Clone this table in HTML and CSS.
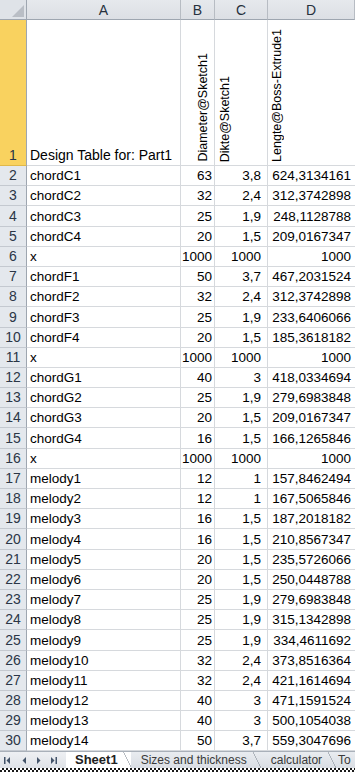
FILE: index.html
```html
<!DOCTYPE html>
<html>
<head>
<meta charset="utf-8">
<link rel="stylesheet" href="styles.css">
</head>
<body>
<div class="sheet">
  <div class="corner"><svg width="12" height="12" viewBox="0 0 12 12"><polygon points="12,0 12,12 0,12" fill="#b9bec5"/></svg></div>
  <div class="ch">A</div>
  <div class="ch">B</div>
  <div class="ch">C</div>
  <div class="ch">D</div>

  <div class="rh sel">1</div>
  <div class="c a title">Design Table for: Part1</div>
  <div class="c rot rot-b"><span>Diameter@Sketch1</span></div>
  <div class="c rot rot-c"><span>Dikte@Sketch1</span></div>
  <div class="c rot rot-d"><span>Lengte@Boss-Extrude1</span></div>

  <div class="rh">2</div><div class="c a">chordC1</div><div class="c b">63</div><div class="c cc">3,8</div><div class="c d">624,3134161</div>
  <div class="rh">3</div><div class="c a">chordC2</div><div class="c b">32</div><div class="c cc">2,4</div><div class="c d">312,3742898</div>
  <div class="rh">4</div><div class="c a">chordC3</div><div class="c b">25</div><div class="c cc">1,9</div><div class="c d">248,1128788</div>
  <div class="rh">5</div><div class="c a">chordC4</div><div class="c b">20</div><div class="c cc">1,5</div><div class="c d">209,0167347</div>
  <div class="rh">6</div><div class="c a">x</div><div class="c b">1000</div><div class="c cc">1000</div><div class="c d">1000</div>
  <div class="rh">7</div><div class="c a">chordF1</div><div class="c b">50</div><div class="c cc">3,7</div><div class="c d">467,2031524</div>
  <div class="rh">8</div><div class="c a">chordF2</div><div class="c b">32</div><div class="c cc">2,4</div><div class="c d">312,3742898</div>
  <div class="rh">9</div><div class="c a">chordF3</div><div class="c b">25</div><div class="c cc">1,9</div><div class="c d">233,6406066</div>
  <div class="rh">10</div><div class="c a">chordF4</div><div class="c b">20</div><div class="c cc">1,5</div><div class="c d">185,3618182</div>
  <div class="rh">11</div><div class="c a">x</div><div class="c b">1000</div><div class="c cc">1000</div><div class="c d">1000</div>
  <div class="rh">12</div><div class="c a">chordG1</div><div class="c b">40</div><div class="c cc">3</div><div class="c d">418,0334694</div>
  <div class="rh">13</div><div class="c a">chordG2</div><div class="c b">25</div><div class="c cc">1,9</div><div class="c d">279,6983848</div>
  <div class="rh">14</div><div class="c a">chordG3</div><div class="c b">20</div><div class="c cc">1,5</div><div class="c d">209,0167347</div>
  <div class="rh">15</div><div class="c a">chordG4</div><div class="c b">16</div><div class="c cc">1,5</div><div class="c d">166,1265846</div>
  <div class="rh">16</div><div class="c a">x</div><div class="c b">1000</div><div class="c cc">1000</div><div class="c d">1000</div>
  <div class="rh">17</div><div class="c a">melody1</div><div class="c b">12</div><div class="c cc">1</div><div class="c d">157,8462494</div>
  <div class="rh">18</div><div class="c a">melody2</div><div class="c b">12</div><div class="c cc">1</div><div class="c d">167,5065846</div>
  <div class="rh">19</div><div class="c a">melody3</div><div class="c b">16</div><div class="c cc">1,5</div><div class="c d">187,2018182</div>
  <div class="rh">20</div><div class="c a">melody4</div><div class="c b">16</div><div class="c cc">1,5</div><div class="c d">210,8567347</div>
  <div class="rh">21</div><div class="c a">melody5</div><div class="c b">20</div><div class="c cc">1,5</div><div class="c d">235,5726066</div>
  <div class="rh">22</div><div class="c a">melody6</div><div class="c b">20</div><div class="c cc">1,5</div><div class="c d">250,0448788</div>
  <div class="rh">23</div><div class="c a">melody7</div><div class="c b">25</div><div class="c cc">1,9</div><div class="c d">279,6983848</div>
  <div class="rh">24</div><div class="c a">melody8</div><div class="c b">25</div><div class="c cc">1,9</div><div class="c d">315,1342898</div>
  <div class="rh">25</div><div class="c a">melody9</div><div class="c b">25</div><div class="c cc">1,9</div><div class="c d">334,4611692</div>
  <div class="rh">26</div><div class="c a">melody10</div><div class="c b">32</div><div class="c cc">2,4</div><div class="c d">373,8516364</div>
  <div class="rh">27</div><div class="c a">melody11</div><div class="c b">32</div><div class="c cc">2,4</div><div class="c d">421,1614694</div>
  <div class="rh">28</div><div class="c a">melody12</div><div class="c b">40</div><div class="c cc">3</div><div class="c d">471,1591524</div>
  <div class="rh">29</div><div class="c a">melody13</div><div class="c b">40</div><div class="c cc">3</div><div class="c d">500,1054038</div>
  <div class="rh">30</div><div class="c a">melody14</div><div class="c b">50</div><div class="c cc">3,7</div><div class="c d">559,3047696</div>
</div>

<div class="tabbar">
  <div class="nav">
    <svg width="60" height="15" viewBox="0 0 60 15">
      <rect x="4" y="4" width="1.5" height="7" fill="#44546a"/>
      <polygon points="10,4 10,11 6.5,7.5" fill="#44546a"/>
      <polygon points="26,4 26,11 22.5,7.5" fill="#44546a"/>
      <polygon points="37,4 37,11 40.5,7.5" fill="#44546a"/>
      <polygon points="51,4 51,11 54.5,7.5" fill="#44546a"/>
      <rect x="55.5" y="4" width="1.5" height="7" fill="#44546a"/>
    </svg>
  </div>
  <div class="tab active">Sheet1</div>
  <div class="tab">Sizes and thickness</div>
  <div class="tab">calculator</div>
  <div class="tab last">To</div>
</div>
<div class="checker"></div>
</body>
</html>
```
FILE: styles.css
```css
html, body {
  margin: 0;
  padding: 0;
  background: #ffffff;
  overflow: hidden;
}

body {
  width: 355px;
  height: 773px;
  font-family: "Liberation Sans", Arial, sans-serif;
  color: #000;
}

.sheet {
  display: grid;
  grid-template-columns: 27px 154px 34px 53px 87px;
  grid-template-rows: 20px 146px repeat(29, 20.2px);
}

.corner {
  background: #dfe3e8;
  border-right: 1px solid #9ea6b0;
  border-bottom: 1px solid #9ea6b0;
  box-sizing: border-box;
  display: flex;
  align-items: flex-end;
  justify-content: flex-end;
  padding: 0 2px 2px 0;
}

.ch {
  background: linear-gradient(#e6e9ed, #dcdfe4);
  border-right: 1px solid #b7bcc3;
  border-bottom: 1px solid #9ea6b0;
  box-sizing: border-box;
  display: flex;
  align-items: center;
  justify-content: center;
  font-size: 14px;
  color: #27313d;
  padding-top: 1px;
}

.rh {
  background: #e4e8ed;
  border-right: 1px solid #9ea6b0;
  border-bottom: 1px solid #c4c9d0;
  box-sizing: border-box;
  display: flex;
  align-items: flex-end;
  justify-content: center;
  font-size: 14px;
  color: #2b3646;
  padding-bottom: 2px;
}

.rh.sel {
  background: #f9d25f;
  border-bottom-color: #e0b84a;
}

.c {
  border-right: 1px solid #d6d9dd;
  border-bottom: 1px solid #d6d9dd;
  box-sizing: border-box;
  display: flex;
  align-items: flex-end;
  font-size: 13.5px;
  white-space: nowrap;
  overflow: hidden;
  padding-bottom: 2px;
}

.a {
  padding-left: 3px;
}

.b {
  justify-content: flex-end;
  padding-right: 2px;
}

.cc {
  justify-content: flex-end;
  padding-right: 6px;
}

.d {
  justify-content: flex-end;
  padding-right: 4px;
  border-right: none;
}

.title {
  padding-bottom: 2px;
  font-size: 14px;
}

.rot {
  padding-bottom: 3px;
}

.rot span {
  writing-mode: vertical-rl;
  transform: rotate(180deg);
  line-height: 16px;
  font-size: 12.5px;
}

.rot-b {
  justify-content: flex-end;
  padding-right: 3px;
}

.rot-c {
  padding-left: 2px;
}

.rot-d {
  padding-left: 1px;
  border-right: none;
}

.tabbar {
  height: 16px;
  display: flex;
  align-items: stretch;
  background: linear-gradient(#eef0f3, #dfe2e7);
  border-top: 1px solid #a9b0b9;
  font-size: 12px;
  color: #3a3a3a;
  overflow: hidden;
  white-space: nowrap;
}

.nav {
  width: 66px;
  display: flex;
  align-items: center;
  flex: none;
}

.tab {
  position: relative;
  display: flex;
  align-items: center;
  padding: 0 14px 0 10px;
  flex: none;
  background: linear-gradient(#e9ecf0, #d9dde3);
}

.tab::after {
  content: "";
  position: absolute;
  right: 0;
  top: 0;
  height: 16px;
  width: 8px;
  background: linear-gradient(to top right, transparent calc(50% - 0.6px), #8e969f 50%, transparent calc(50% + 0.6px));
}

.tab.active {
  background: #ffffff;
  font-weight: bold;
  font-size: 13px;
  color: #222;
  padding: 0 13px 0 9px;
  margin-top: -1px;
}

.tab.last {
  padding-left: 2px;
}

.tab.last::after {
  display: none;
}

.checker {
  height: 4px;
  background: repeating-conic-gradient(#1a1a1a 0 25%, #ffffff 0 50%) 0 0 / 4px 4px;
}
```
